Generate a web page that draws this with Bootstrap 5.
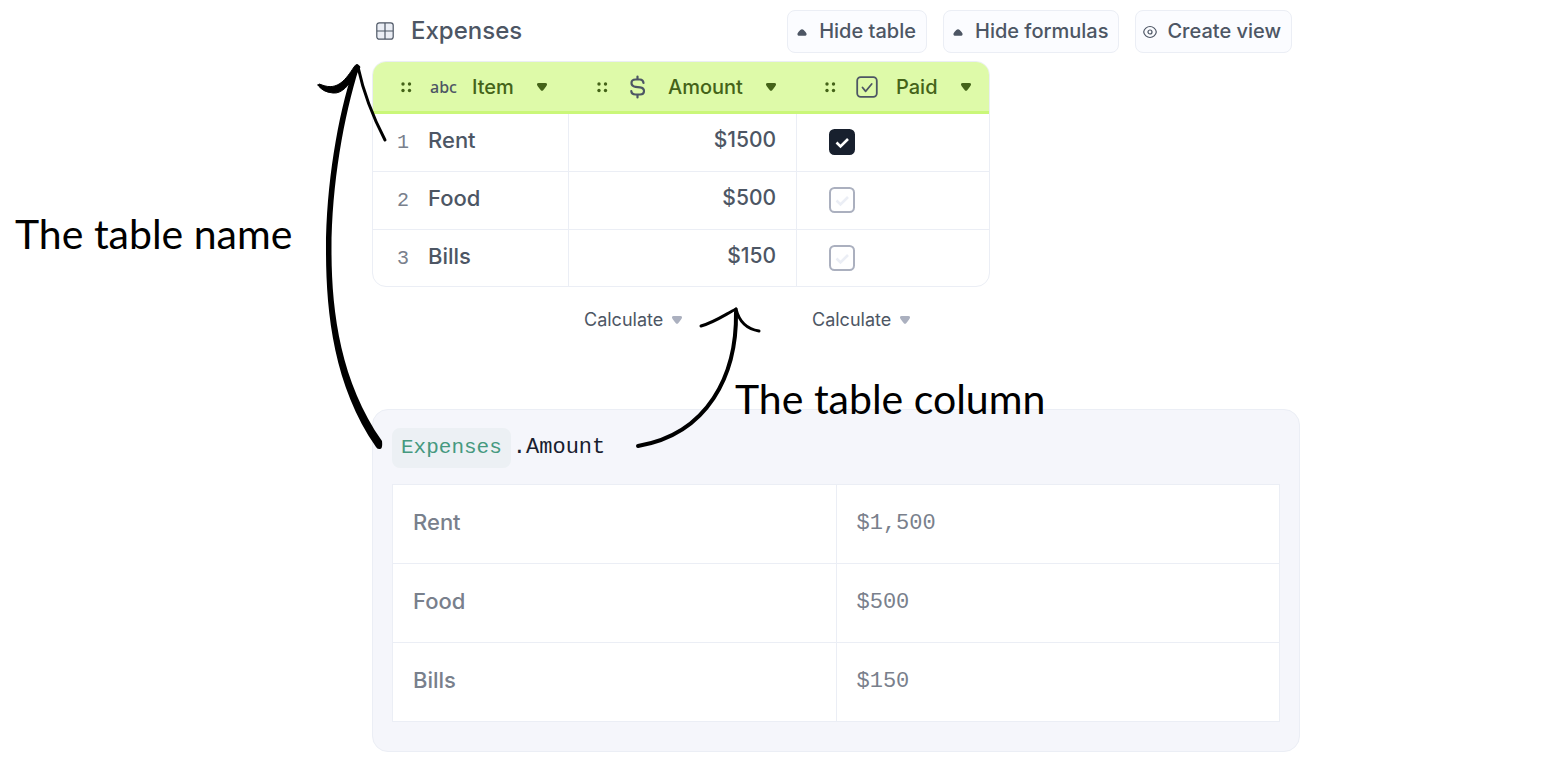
<!DOCTYPE html>
<html lang="en">
<head>
<meta charset="utf-8">
<meta name="viewport" content="width=device-width, initial-scale=1">
<title>Expenses</title>
<link href="https://cdn.jsdelivr.net/npm/bootstrap@5.3.0/dist/css/bootstrap.min.css" rel="stylesheet">
<style>
  body { font-family: Inter, "Liberation Sans", sans-serif; color: #4d5664; background: #fff; }
  .doc-page { padding: 10px 252px 14px 372px; }
  .doc-title { font-size: 24px; line-height: 32px; font-weight: 500; gap: 17px; padding-bottom: 2px; }
  .tool-btn { --bs-btn-bg: #fbfcff; --bs-btn-border-color: #ebeef5; --bs-btn-color: #4d5664;
    --bs-btn-hover-bg: #f3f5fa; --bs-btn-hover-border-color: #e2e6ef; --bs-btn-hover-color: #4d5664;
    font-size: 20px; line-height: 31px; font-weight: 500; border-radius: 8px; padding: 5px 10px 5px 7px; gap: 10px; }
  .sheet { width: 618px; border: 1px solid #ebeef5; border-radius: 14px; overflow: hidden; margin-top: 8px; }
  .sheet table { table-layout: fixed; border-collapse: separate; border-spacing: 0; font-size: 22px; font-weight: 500; line-height: 32px; }
  .sheet th { background: #defaa9; color: #446318; border-bottom: 3px solid #caf779; font-size: 20px; font-weight: 500; height: 52px; padding: 1px 0 0; }
  .head-cell { gap: 16px; padding-left: 28px; }
  .kind { width: 26px; margin-left: 2px; color: #4d5664; font: 500 16px/20px "Noto Sans", sans-serif; text-align: center; }
  .bare { border: 0; background: none; padding: 0; color: inherit; line-height: 1; }
  .open-menu { margin-left: 6px; }
  .sheet td { height: 58px; padding: 0 20px 6px; border-bottom: 1px solid #ebeef5; border-right: 1px solid #ebeef5; }
  .sheet .amount { font-size: 21px; text-align: right; }
  .sheet td:last-child { border-right: 0; padding: 0 0 2px 32px; }
  .sheet tr:last-child td { border-bottom: 0; height: 56px; padding-bottom: 4px; }
  .sheet tr:last-child td:last-child { padding-bottom: 0; }
  .row-no { display: inline-block; width: 31px; font: 20px/20px "Liberation Mono", monospace; color: #79808c; }
  .sheet .item-cell { padding-left: 24px; }
  .tick { display: block; width: 26px; height: 26px; margin: 0; border: 2px solid #abb0bf; border-radius: 5px;
    background-image: url("data:image/svg+xml,%3Csvg xmlns='http://www.w3.org/2000/svg' viewBox='0 0 22 22'%3E%3Cpath d='M5.500 11.500l4 4 7.500-7.500' fill='none' stroke='%23ebeef5' stroke-width='2.600'/%3E%3C/svg%3E") !important; }
  .tick:checked { background-color: #18202e; border-color: #18202e;
    background-image: url("data:image/svg+xml,%3Csvg xmlns='http://www.w3.org/2000/svg' viewBox='0 0 22 22'%3E%3Cpath d='M5.500 11.500l4 4 7.500-7.500' fill='none' stroke='white' stroke-width='2.600'/%3E%3C/svg%3E") !important; }
  .totals { display: grid; grid-template-columns: 196px 228px 193px; margin: 17px 0 73px; font-size: 18px; line-height: 32px; }
  .totals button { gap: 8px; padding-left: 16px; line-height: 32px; }
  .formula-box { background: #f5f6fb; border: 1px solid #ebeef5; border-radius: 16px; padding: 18px 19px 29px; }
  .code-line { font: 22px/32px "Liberation Mono", monospace; color: #18202e; margin-bottom: 16px; }
  .token { background: #ecf0f4; color: #46997f; border-radius: 8px; padding: 4px 9px; font-size: 21px; margin-right: 2px; }
  .result { table-layout: fixed; background: #fff; border: 1px solid #ebeef5; color: #79808c; font-size: 22px; line-height: 32px; font-weight: 500; }
  .result td { height: 79px; padding: 0 20px 5px; border: 1px solid #ebeef5; }
  .result .cash { font: 22px/32px "Liberation Mono", monospace; padding-bottom: 1px; }
  .ink { position: absolute; left: 0; top: 0; pointer-events: none; }
  .note { position: absolute; font: 400 41px/56px Lato, sans-serif; color: #000; white-space: nowrap; margin: 0; }
  .note-name { left: 15px; top: 206px; }
  .note-column { left: 735px; top: 371px; }
</style>
</head>
<body>
<svg class="d-none" xmlns="http://www.w3.org/2000/svg">
  <symbol id="grip" viewBox="0 0 11 11"><g fill="currentColor"><circle cx="2" cy="2" r="1.700"/><circle cx="8.500" cy="2" r="1.700"/><circle cx="2" cy="8.500" r="1.700"/><circle cx="8.500" cy="8.500" r="1.700"/></g></symbol>
  <symbol id="down" viewBox="0 0 12 10"><path fill="currentColor" d="M2.500 1h7Q11.500 1 11 3 10.700 3.700 7.200 8.200 6 9.500 4.800 8.200 1.300 3.700 1 3 .5 1 2.500 1z"/></symbol>
  <symbol id="up" viewBox="0 0 14 14"><path fill="currentColor" d="M3.500 10.800h7Q12 10.500 11.500 8.500 11 7 8.700 5 7 3.500 5.300 5 3 7 2.500 8.500 2 10.500 3.500 10.800z"/></symbol>
</svg>
<div class="doc-page position-relative">
  <header class="d-flex align-items-center justify-content-between pe-2">
    <h1 class="doc-title d-flex align-items-center mb-0 ms-1">
      <svg width="18" height="18" viewBox="0 0 18 18" fill="#ebeef5" stroke="#4d5664" stroke-width="1.200"><rect x=".8" y=".8" width="16.400" height="16.400" rx="2.500"/><path d="M9 1v16M1 9h16"/></svg>
      Expenses
    </h1>
    <div class="d-flex gap-3">
      <button type="button" class="btn tool-btn d-flex align-items-center"><svg width="14" height="14"><use href="#up"/></svg>Hide table</button>
      <button type="button" class="btn tool-btn d-flex align-items-center"><svg width="14" height="14"><use href="#up"/></svg>Hide formulas</button>
      <button type="button" class="btn tool-btn d-flex align-items-center"><svg width="14" height="14" viewBox="0 0 14 14" fill="none" stroke="currentColor" stroke-width="1.200"><path d="M.7 7C1 4 4 1.500 7 1.500S13 4 13.300 7C13 10 10 12.500 7 12.500S1 10 .7 7z"/><circle cx="7" cy="7" r="2"/></svg>Create view</button>
    </div>
  </header>

  <div class="sheet">
    <table class="w-100">
      <colgroup><col style="width:196px"><col style="width:228px"><col></colgroup>
      <thead>
        <tr>
          <th scope="col"><div class="head-cell d-flex align-items-center">
            <button type="button" class="bare d-flex" aria-label="Move Item"><svg width="11" height="11"><use href="#grip"/></svg></button>
            <span class="kind">abc</span>Item
            <button type="button" class="bare d-flex open-menu" aria-label="Item options"><svg width="12" height="10"><use href="#down"/></svg></button></div></th>
          <th scope="col"><div class="head-cell d-flex align-items-center">
            <button type="button" class="bare d-flex" aria-label="Move Amount"><svg width="11" height="11"><use href="#grip"/></svg></button>
            <span class="kind d-flex justify-content-center"><svg width="18" height="24" viewBox="1 0 18 24" fill="none" stroke="currentColor" stroke-width="2.200" stroke-linecap="round"><path d="M8.500 1.500v3M8.500 19.500v3M14.500 8C14.300 5.800 13 4.500 11 4.500H6.500C4 4.500 2.500 6 2.500 8s1.500 3.500 4 3.800l4.500.6c2.500.4 4 1.500 4 3.600s-1.500 3.500-4 3.500H6.500c-2.500 0-4-1.200-4.200-3.300"/></svg></span>Amount
            <button type="button" class="bare d-flex open-menu" aria-label="Amount options"><svg width="12" height="10"><use href="#down"/></svg></button></div></th>
          <th scope="col"><div class="head-cell d-flex align-items-center">
            <button type="button" class="bare d-flex" aria-label="Move Paid"><svg width="11" height="11"><use href="#grip"/></svg></button>
            <span class="kind d-flex justify-content-center"><svg width="22" height="22" viewBox="0 0 22 22" fill="none" stroke="currentColor" stroke-width="1.800"><rect x="1.200" y="1.200" width="19.600" height="19.600" rx="3.500"/><path d="M6.500 11.500l3.200 3.800 6-7.300" stroke-linecap="round" stroke-linejoin="round"/></svg></span>Paid
            <button type="button" class="bare d-flex open-menu" aria-label="Paid options"><svg width="12" height="10"><use href="#down"/></svg></button></div></th>
        </tr>
      </thead>
      <tbody>
        <tr><td class="item-cell"><span class="row-no">1</span>Rent</td><td class="amount">$1500</td><td><input class="form-check-input tick" type="checkbox" aria-label="Rent paid" checked></td></tr>
        <tr><td class="item-cell"><span class="row-no">2</span>Food</td><td class="amount">$500</td><td><input class="form-check-input tick" type="checkbox" aria-label="Food paid"></td></tr>
        <tr><td class="item-cell"><span class="row-no">3</span>Bills</td><td class="amount">$150</td><td><input class="form-check-input tick" type="checkbox" aria-label="Bills paid"></td></tr>
      </tbody>
    </table>
  </div>

  <div class="totals">
    <span></span>
    <button type="button" class="bare d-flex align-items-center">Calculate<svg width="12" height="10" color="#abb0bf"><use href="#down"/></svg></button>
    <button type="button" class="bare d-flex align-items-center">Calculate<svg width="12" height="10" color="#abb0bf"><use href="#down"/></svg></button>
  </div>

  <section class="formula-box">
    <div class="code-line d-flex align-items-center"><span class="token">Expenses</span><span>.Amount</span></div>
    <table class="result w-100">
      <tbody>
        <tr><td>Rent</td><td class="cash">$1,500</td></tr>
        <tr><td>Food</td><td class="cash">$500</td></tr>
        <tr><td>Bills</td><td class="cash">$150</td></tr>
      </tbody>
    </table>
  </section>

  <!-- hand-drawn arrows and captions over the document -->
  <svg class="ink" width="1060" height="460" viewBox="0 0 1060 460" fill="none" stroke="#000" stroke-linecap="round" stroke-linejoin="round" aria-hidden="true">
    <path fill="#000" stroke="none" d="M376 447C333 385 326 310 326 250C326 185 338 115 353 70L359 68C344 115 331.500 185 331.500 250C331.500 310 340 381 382 441Q383 450 379 449Q377 449 376 447z"/>
    <path fill="#000" stroke-width="1" d="M318 85Q319 83 322 85C338 91 346 79 354 67Q357 62 360 67L356 74C349 85 342 94 333 93Q322 92 318 85z"/>
    <path stroke-width="3" d="M358 67C364 95 374 119 385 140"/>
    <path stroke-width="4" d="M638 446C708 434 737 375 736 312"/>
    <path stroke-width="3" d="M701 326C715 322 726 314 736 309"/>
    <path stroke-width="3" d="M736 309C739 321 746 329 759 331"/>
  </svg>
  <p class="note note-name">The table name</p>
  <p class="note note-column">The table column</p>
</div>
<script src="https://cdn.jsdelivr.net/npm/bootstrap@5.3.0/dist/js/bootstrap.bundle.min.js"></script>
</body>
</html>
